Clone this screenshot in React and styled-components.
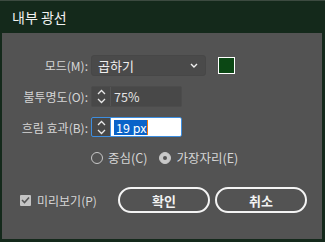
import React from 'react'
import styled, { createGlobalStyle } from 'styled-components'

const GlobalStyle = createGlobalStyle`
  html, body {
    margin: 0;
    padding: 0;
    background: #14291b;
  }
  body {
    font-family: "Noto Sans CJK KR", "Noto Sans", sans-serif;
  }
`

const Dialog = styled.div`
  width: 325px;
  height: 242px;
  box-sizing: border-box;
  background: #535353;
  border-style: solid;
  border-color: #14291b;
  border-width: 0 3px 3px 2px;
  display: flex;
  flex-direction: column;
`

const TitleBar = styled.div`
  height: 33px;
  flex: none;
  box-sizing: border-box;
  background: #14291b;
  border-top: 1px solid #3c4a40;
  margin: 0 -3px 0 -2px;
  padding-left: 12px;
  display: flex;
  align-items: center;
  color: #f2f2f2;
  font-size: 14px;
`

const Form = styled.div`
  display: grid;
  grid-template-columns: 86px auto;
  column-gap: 3px;
  row-gap: 10px;
  padding-top: 22px;
  align-items: center;
`

const Label = styled.div`
  text-align: right;
  color: #d6d6d6;
  font-size: 12px;
  white-space: nowrap;
`

const Controls = styled.div`
  display: flex;
  align-items: center;
  gap: 12px;
`

const Select = styled.div`
  width: 115px;
  height: 21px;
  box-sizing: border-box;
  background: #4a4a4a;
  border: 1px solid #474747;
  border-radius: 3px;
  display: flex;
  align-items: center;
  justify-content: space-between;
  padding: 0 7px 0 6px;
  color: #eeeeee;
  font-size: 13px;
`

const Swatch = styled.div`
  width: 17px;
  height: 17px;
  box-sizing: border-box;
  border: 1px solid #ffffff;
  background: ${(props) => props.color};
`

const Spinner = styled.div`
  width: 91px;
  height: ${(props) => (props.focused ? '20px' : '21px')};
  box-sizing: border-box;
  display: flex;
  border: 1px solid ${(props) => (props.focused ? '#3d8ee0' : '#4c4c4c')};
  border-radius: 2px;
  background: #484848;
  overflow: hidden;
`

const Arrows = styled.div`
  width: 18px;
  flex: none;
  border-right: 1px solid ${(props) => (props.focused ? '#3d8ee0' : '#555555')};
  display: flex;
  align-items: center;
  justify-content: center;
`

const Value = styled.div`
  flex: 1;
  display: flex;
  align-items: center;
  padding-left: 3px;
  background: ${(props) => (props.focused ? '#ffffff' : 'transparent')};
  color: #e6e6e6;
  font-size: 12.5px;
`

const Selected = styled.span`
  background: #0a63c9;
  color: #ffffff;
  padding: 0 1px 0 2px;
  line-height: 15px;
  border-right: 1px solid #f07a10;
`

const RadioRow = styled.div`
  display: flex;
  align-items: center;
  gap: 12px;
  padding-top: 1px;
`

const RadioItem = styled.div`
  display: flex;
  align-items: center;
  gap: 5px;
  color: #d6d6d6;
  font-size: 12.5px;
`

const Radio = styled.span`
  width: 12px;
  height: 12px;
  box-sizing: border-box;
  border-radius: 50%;
  border: 1px solid #c8c8c8;
  background: ${(props) => (props.checked ? '#c8c8c8' : 'transparent')};
  display: flex;
  align-items: center;
  justify-content: center;

  &::after {
    content: '';
    width: 4px;
    height: 4px;
    border-radius: 50%;
    background: #535353;
    display: ${(props) => (props.checked ? 'block' : 'none')};
  }
`

const Footer = styled.div`
  display: flex;
  align-items: center;
  justify-content: space-between;
  padding: 0 15px 0 18px;
  margin-top: 20px;
`

const CheckGroup = styled.div`
  display: flex;
  align-items: center;
  gap: 6px;
  color: #d6d6d6;
  font-size: 12px;
`

const CheckBox = styled.span`
  width: 11px;
  height: 11px;
  border-radius: 1px;
  background: #c4c4c4;
  display: flex;
  align-items: center;
  justify-content: center;
`

const Buttons = styled.div`
  display: flex;
  gap: 5px;
`

const Button = styled.button`
  width: 92px;
  height: 26px;
  box-sizing: border-box;
  border: 2px solid #f4f4f4;
  border-radius: 13px;
  background: transparent;
  color: #f2f2f2;
  font-family: "Noto Sans CJK KR", "Noto Sans", sans-serif;
  font-size: 13px;
  font-weight: 700;
  padding: 0;
`

const Chevron = () => (
  <svg width="8" height="5" viewBox="0 0 8 5">
    <polyline points="1,1 4,4 7,1" fill="none" stroke="#f0f0f0" strokeWidth="1.4" />
  </svg>
)

const UpDown = ({ color }) => (
  <svg width="9" height="15" viewBox="0 0 9 15">
    <polyline points="1,5 4.5,1.5 8,5" fill="none" stroke={color} strokeWidth="1.3" />
    <polyline points="1,10 4.5,13.5 8,10" fill="none" stroke={color} strokeWidth="1.3" />
  </svg>
)

const Check = () => (
  <svg width="9" height="8" viewBox="0 0 9 8">
    <polyline points="1,4 3.5,6.5 8,1.5" fill="none" stroke="#555555" strokeWidth="1.6" />
  </svg>
)

export default function App() {
  return (
    <>
      <GlobalStyle />
      <Dialog>
        <TitleBar>내부 광선</TitleBar>
        <Form>
          <Label>모드(M):</Label>
          <Controls>
            <Select>
              <span>곱하기</span>
              <Chevron />
            </Select>
            <Swatch color="#0b4714" />
          </Controls>

          <Label>불투명도(O):</Label>
          <Spinner>
            <Arrows>
              <UpDown color="#e8e8e8" />
            </Arrows>
            <Value>75%</Value>
          </Spinner>

          <Label>흐림 효과(B):</Label>
          <Spinner focused>
            <Arrows focused>
              <UpDown color="#e8e8e8" />
            </Arrows>
            <Value focused>
              <Selected>19 px</Selected>
            </Value>
          </Spinner>

          <div />
          <RadioRow>
            <RadioItem>
              <Radio />
              중심(C)
            </RadioItem>
            <RadioItem>
              <Radio checked />
              가장자리(E)
            </RadioItem>
          </RadioRow>
        </Form>
        <Footer>
          <CheckGroup>
            <CheckBox>
              <Check />
            </CheckBox>
            미리보기(P)
          </CheckGroup>
          <Buttons>
            <Button>확인</Button>
            <Button>취소</Button>
          </Buttons>
        </Footer>
      </Dialog>
    </>
  )
}
